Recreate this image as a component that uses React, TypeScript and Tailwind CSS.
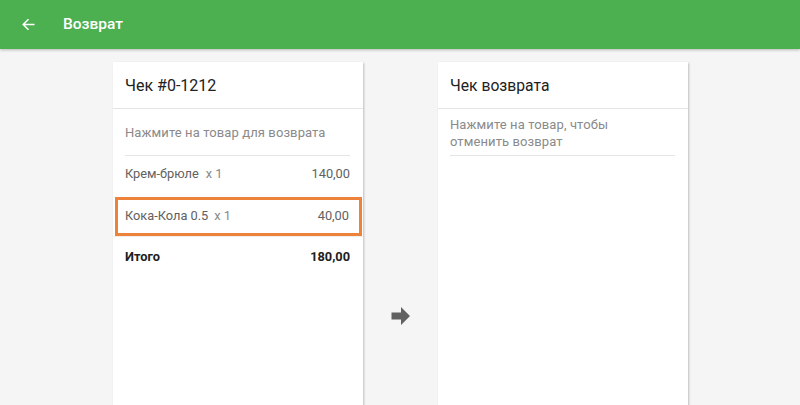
export default function App() {
  return (
    <div className="flex h-[405px] w-[800px] flex-col overflow-hidden bg-[#f5f5f5] font-['Roboto',sans-serif]">
      <header className="z-10 flex h-[49px] shrink-0 items-center bg-[#4caf50] shadow-[0_1px_3px_rgba(0,0,0,0.25)]">
        <svg className="ml-[22px] h-[13px] w-[13px]" viewBox="0 0 13 13" fill="none" stroke="#fff" strokeWidth="1.5">
          <path d="M12.5 6.5H1.5M6.5 1.2L1.2 6.5L6.5 11.8" />
        </svg>
        <span className="ml-[28px] text-[15.5px] font-medium text-white">Возврат</span>
      </header>
      <main className="flex flex-1 items-stretch pl-[113px] pt-[13px]">
        <section className="flex h-[400px] w-[250px] flex-col bg-white shadow-[1px_1px_2px_rgba(0,0,0,0.22)]">
          <div className="flex h-[47px] shrink-0 items-center border-b border-[#e4e4e4] pt-[2px] pl-3 text-[16px] leading-5 text-[#212121]">
            Чек #0-1212
          </div>
          <div className="mr-[13px] ml-3 flex h-[47px] shrink-0 items-center border-b border-[#e4e4e4] pt-[2px] text-[13px] tracking-[0.1px] text-[#8a8a8a]">
            Нажмите на товар для возврата
          </div>
          <div className="flex h-[35px] shrink-0 items-center justify-between pr-[13px] pl-3 text-[12.8px] text-[#616161]">
            <span><span className="mr-[7px]">Крем-брюле</span><span className="text-[#8a8a8a]">x 1</span></span>
            <span>140,00</span>
          </div>
          <div className="mt-[6px] mr-[1px] ml-[2px] flex h-[39px] shrink-0 items-center justify-between border-[3px] border-[#ed833a] pr-[10px] pb-[2px] pl-[7px] text-[12.8px] text-[#616161]">
            <span><span className="mr-[6px]">Кока-Кола 0.5</span><span className="text-[#8a8a8a]">x 1</span></span>
            <span>40,00</span>
          </div>
          <div className="h-px shrink-0 bg-[#eeeeee]" />
          <div className="flex h-[40px] shrink-0 items-center justify-between pr-[13px] pl-3 text-[12.8px] font-bold text-[#212121]">
            <span>Итого</span>
            <span>180,00</span>
          </div>
        </section>
        <div className="flex w-[75px] shrink-0 justify-center pt-[245px]">
          <svg className="h-[18px] w-[20px]" viewBox="0 0 20 18" fill="#616161">
            <path d="M0.5 5.5H10V0L19 9L10 18V12.5H0.5Z" />
          </svg>
        </div>
        <section className="flex h-[400px] w-[250px] flex-col bg-white shadow-[1px_1px_2px_rgba(0,0,0,0.22)]">
          <div className="flex h-[47px] shrink-0 items-center border-b border-[#e4e4e4] pt-[2px] pl-3 text-[15.7px] leading-5 text-[#212121]">
            Чек возврата
          </div>
          <div className="mr-[13px] ml-3 h-[47px] shrink-0 border-b border-[#e4e4e4] pt-[7px] text-[13px] leading-[17px] tracking-[0.1px] text-[#8a8a8a]">
            Нажмите на товар, чтобы
            <br />
            отменить возврат
          </div>
        </section>
      </main>
    </div>
  );
}
